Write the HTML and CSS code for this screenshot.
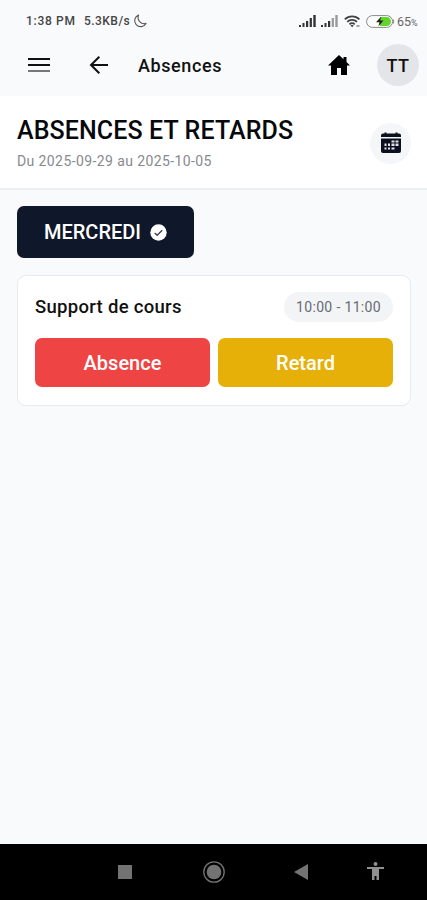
FILE: index.html
```html
<!DOCTYPE html>
<html lang="fr">
  <head>
    <meta charset="UTF-8" />
    <meta name="viewport" content="width=device-width, initial-scale=1.0" />
    <title>Absences</title>
    <link rel="stylesheet" href="styles.css">
  </head>
  <body>
    <!-- Status bar -->
    <div class="status-bar">
      <span class="clock">1:38 PM</span>
      <span class="speed">5.3KB/s</span>
      <svg class="moon" width="14" height="14" viewBox="0 0 14 14" fill="none" stroke="#555" stroke-width="1.1" stroke-linejoin="round">
        <path d="M5.6 1A6 6 0 1 0 13 9.4A6.2 6.2 0 0 1 5.6 1Z" />
      </svg>
      <div class="status-icons">
        <svg width="17" height="12" viewBox="0 0 17 12" fill="#333">
          <path d="M0 10h2v2H0zM3.5 8h2v4h-2zM7 6h2.200v6H7zM10.700 3h2.200v9h-2.200zM14.300 0h2.400v12h-2.400z" />
        </svg>
        <svg class="signal-two" width="17" height="12" viewBox="0 0 17 12">
          <path fill="#333" d="M0 10h2v2H0zM3.5 8h2v4h-2zM7 6h2.200v6H7z" />
          <path fill="#999" d="M10.700 3h2.200v9h-2.200zM14.300 0h2.400v12h-2.400z" />
        </svg>
        <svg class="wifi" width="17" height="13" viewBox="0 0 17 13" fill="none" stroke="#444" stroke-width="1.8">
          <path d="M.8 4.300a10.500 10.500 0 0 1 14.600 0M3.200 6.900a7 7 0 0 1 9.800 0M5.500 9.300a3.700 3.700 0 0 1 5.200 0" />
          <path d="M6.500 10h3.200L8.100 12.500z" fill="#444" stroke="none" />
          <path d="M12.500 11h3" stroke="#999" />
        </svg>
        <svg class="battery" width="29" height="13" viewBox="0 0 29 13">
          <rect x=".6" y=".6" width="26" height="11.8" rx="5.9" fill="#fff" stroke="#888" />
          <path d="M14 2h6.500a4.500 4.500 0 0 1 0 9H14z" fill="#62d52c" />
          <path d="M27.600 4.500v4" stroke="#888" />
          <path d="M15 1.800l-5 5.400h3.400l-.9 4 5-5.600h-3.300z" fill="#222" />
        </svg>
        <span class="battery-level">65<small>%</small></span>
      </div>
    </div>

    <!-- App bar -->
    <header class="app-bar">
      <svg class="menu" width="22" height="16" viewBox="0 0 22 16" fill="none" stroke-width="2">
        <path stroke="#111" d="M0 2h22M0 8h22" />
        <path stroke="#777" d="M0 14h22" />
      </svg>
      <svg class="back" width="20" height="18" viewBox="0 0 20 18" fill="none" stroke="#111" stroke-width="2">
        <path d="M19 9H1.800M10.300 .7L2 9l8.300 8.300" />
      </svg>
      <h1 class="app-title">Absences</h1>
      <svg class="home" width="22" height="20" viewBox="0 0 22 20" fill="#000">
        <path d="M11 0L0 10.500h3V20h6v-7h4v7h6v-9.500h3l-3.500-3.400V2h-3v2.300z" />
      </svg>
      <div class="avatar">TT</div>
    </header>

    <section class="heading">
      <div>
        <h2>ABSENCES ET RETARDS</h2>
        <p>Du 2025-09-29 au 2025-10-05</p>
      </div>
      <button class="calendar-btn" aria-label="Calendrier">
        <svg width="22" height="22" viewBox="0 0 22 22">
          <path fill="#0b1020" d="M3 1.500h1.500V.5h2v1h9v-1h2v1H19a2 2 0 0 1 2 2V5H1V3.500a2 2 0 0 1 2-2zM1 6.500h20V19a2 2 0 0 1-2 2H3a2 2 0 0 1-2-2z" />
          <path fill="#dfe1e6" d="M11.500 8.500h3v2h-3zM15.500 8.500h3v2h-3zM4.500 11.500h2v2.500h-2zM8 11.500h2v2.500H8zM11.500 11.500h3v2.500h-3zM15.500 11.500h3v2.500h-3zM4.500 15.500h2v2h-2zM8 15.500h2v2H8zM11.500 15.500h3v2h-3z" />
        </svg>
      </button>
    </section>

    <main class="content">
      <button class="day">
        MERCREDI
        <svg width="17" height="17" viewBox="0 0 17 17">
          <circle cx="8.5" cy="8.5" r="8.2" fill="#fff" />
          <path d="M4.700 8.900l2.500 2.300 5-5" fill="none" stroke="#3c4252" stroke-width="1.4" />
        </svg>
      </button>

      <div class="card">
        <div class="card-header">
          <h3>Support de cours</h3>
          <span class="time">10:00 - 11:00</span>
        </div>
        <div class="actions">
          <button class="absence">Absence</button>
          <button class="retard">Retard</button>
        </div>
      </div>
    </main>

    <!-- Android navigation -->
    <nav class="nav-bar">
      <svg width="14" height="14" viewBox="0 0 14 14">
        <path fill="#737373" d="M0 0h14v14H0z" />
      </svg>
      <svg class="nav-home" width="22" height="22" viewBox="0 0 22 22">
        <circle cx="11" cy="11" r="10.2" fill="none" stroke="#737373" stroke-width="1.3" />
        <circle cx="11" cy="11" r="7.3" fill="#737373" />
      </svg>
      <svg class="nav-back" width="14" height="16" viewBox="0 0 14 16">
        <path fill="#737373" d="M14 0v16L0 8z" />
      </svg>
      <svg class="nav-access" width="17" height="18" viewBox="0 0 17 18" fill="#909090">
        <circle cx="8.5" cy="2" r="2" />
        <path d="M0 5h17v2h-5v11H9.500v-4h-2v4H5V7H0z" />
      </svg>
    </nav>
  </body>
</html>
```

FILE: styles.css
```css
* {
  box-sizing: border-box;
}
body {
  margin: 0;
  height: 100vh;
  display: flex;
  flex-direction: column;
  font-family: Roboto, sans-serif;
  background-color: #f9fafc;
  color: #111;
}
h1,
h2,
h3,
p {
  margin: 0;
}
svg {
  display: block;
  flex-shrink: 0;
}
button {
  border: none;
  font-family: inherit;
  cursor: pointer;
}

/* Status bar */
.status-bar {
  height: 40px;
  padding: 2px 8px 0 26px;
  display: flex;
  align-items: center;
  font-size: 12px;
  font-weight: 500;
  color: #444;
  white-space: nowrap;
}
.clock {
  width: 58px;
  letter-spacing: 0.7px;
}
.speed {
  width: 49px;
  letter-spacing: 0.45px;
}
.status-icons {
  margin-left: auto;
  display: flex;
  align-items: center;
}
.signal-two {
  margin-left: 5px;
}
.wifi {
  margin-left: 6px;
}
.battery {
  margin-left: 5px;
}
.battery-level {
  width: 22px;
  margin-left: 2px;
  font-size: 12.5px;
  font-weight: 400;
  color: #666;
}
.battery-level small {
  font-size: 9px;
}

/* App bar */
.app-bar {
  height: 56px;
  padding: 0 8px 6px 28px;
  display: flex;
  align-items: center;
}
.back {
  margin-left: 39px;
}
.app-title {
  margin-left: 29px;
  font-size: 18px;
  font-weight: 500;
  letter-spacing: 0.6px;
}
.home {
  margin-left: auto;
}
.avatar {
  width: 42px;
  height: 42px;
  margin-left: 27px;
  border-radius: 50%;
  display: flex;
  align-items: center;
  justify-content: center;
  background-color: #e4e5e9;
  font-size: 18px;
  font-weight: 500;
  letter-spacing: 0.5px;
}

.heading {
  height: 94px;
  padding: 2px 16px 0 17px;
  display: flex;
  align-items: center;
  justify-content: space-between;
  background-color: #fff;
  border-bottom: 2px solid #edeef0;
}
.heading h2 {
  font-size: 25px;
  font-weight: 500;
  line-height: 32px;
  letter-spacing: 0.1px;
  color: #07080c;
}
.heading p {
  margin-top: 4px;
  font-size: 14px;
  line-height: 20px;
  letter-spacing: 0.4px;
  color: #868a91;
}
.calendar-btn {
  width: 41px;
  height: 41px;
  padding: 0;
  border-radius: 50%;
  display: flex;
  align-items: center;
  justify-content: center;
  background-color: #f5f6f8;
}

.content {
  flex: 1;
  padding: 16px 16px 0 17px;
}
.day {
  width: 177px;
  height: 52px;
  padding: 0;
  border-radius: 7px;
  display: flex;
  align-items: center;
  justify-content: center;
  gap: 9px;
  background-color: #0f172a;
  color: #fff;
  font-size: 20px;
  font-weight: 500;
}
.card {
  height: 131px;
  margin-top: 17px;
  padding: 16px 17px;
  background-color: #fff;
  border: 1px solid #e8eaee;
  border-radius: 9px;
}
.card-header {
  height: 30px;
  display: flex;
  align-items: center;
  justify-content: space-between;
}
.card-header h3 {
  font-size: 18.5px;
  font-weight: 500;
  line-height: 24px;
  letter-spacing: 0.3px;
}
.time {
  width: 109px;
  height: 30px;
  border-radius: 15px;
  background-color: #f3f4f6;
  color: #666b73;
  font-size: 14px;
  line-height: 30px;
  letter-spacing: 0.35px;
  text-align: center;
}
.actions {
  margin-top: 16px;
  display: grid;
  grid-template-columns: 1fr 1fr;
  gap: 8px;
}
.actions button {
  height: 49px;
  padding: 0;
  border-radius: 7px;
  color: #fff;
  font-size: 20px;
  font-weight: 500;
}
.absence {
  background-color: #ef4444;
}
.retard {
  background-color: #e7b008;
}

/* Android navigation */
.nav-bar {
  height: 56px;
  padding-left: 118px;
  display: flex;
  align-items: center;
  background-color: #000;
}
.nav-home {
  margin-left: 71px;
}
.nav-back {
  margin-left: 69px;
}
.nav-access {
  margin: -3px 0 0 59px;
}
```
